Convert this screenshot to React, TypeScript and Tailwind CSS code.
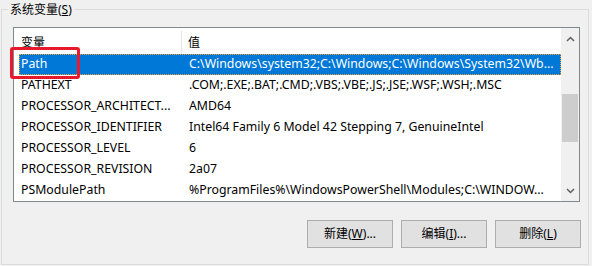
import React from "react";

const rows: [string, string][] = [
  ["Path", "C:\\Windows\\system32;C:\\Windows;C:\\Windows\\System32\\Wb..."],
  ["PATHEXT", ".COM;.EXE;.BAT;.CMD;.VBS;.VBE;.JS;.JSE;.WSF;.WSH;.MSC"],
  ["PROCESSOR_ARCHITECT...", "AMD64"],
  ["PROCESSOR_IDENTIFIER", "Intel64 Family 6 Model 42 Stepping 7, GenuineIntel"],
  ["PROCESSOR_LEVEL", "6"],
  ["PROCESSOR_REVISION", "2a07"],
  ["PSModulePath", "%ProgramFiles%\\WindowsPowerShell\\Modules;C:\\WINDOW..."],
];

const font = { fontFamily: '"Segoe UI", "Noto Sans", "Noto Sans CJK SC", sans-serif' };

function Btn({ label, k, suffix }: { label: string; k: string; suffix: string }) {
  return (
    <div className="w-[86px] h-[28px] border border-[#adadad] bg-[#e1e1e1] flex items-center justify-center text-[12px] text-black">
      <span>
        {label}(<span className="underline">{k}</span>){suffix}
      </span>
    </div>
  );
}

export default function App() {
  return (
    <div className="w-[592px] h-[266px] bg-[#f0f0f0] text-[12px] text-black overflow-hidden" style={font}>
      <div className="relative ml-px mt-[9px] w-[588px] h-[256px] border border-[#dcdcdc] pt-[17px] pl-[11px]">
        <div className="absolute left-[6px] top-[-9px] px-[2px] bg-[#f0f0f0] leading-[18px] text-[12px]">
          系统变量(<span className="underline">S</span>)
        </div>
        <div className="w-[567px] h-[175px] border border-[#828790] bg-white flex">
          <div className="flex-1 min-w-0 flex flex-col">
            <div className="h-[26px] pt-[3px] flex items-center shrink-0">
              <div className="w-[168px] h-full pl-[7px] flex items-center border-r border-[#e5e5e5]">变量</div>
              <div className="pl-[6px]">值</div>
            </div>
            {rows.map(([n, v], i) => {
              const sel = i === 0;
              return (
                <div key={n} className="h-[21px] shrink-0 flex pl-[5px] relative text-[12.3px]">
                  <div
                    className={
                      "flex-1 flex items-center min-w-0 " +
                      (sel ? "bg-[#0078d7] text-white outline-1 outline-dotted outline-[#f0a030] -outline-offset-1" : "")
                    }
                  >
                    <div className="w-[163px] pl-[2px] whitespace-nowrap overflow-hidden shrink-0">{n}</div>
                    <div className="pl-[7px] whitespace-nowrap min-w-0 flex-1 pr-[4px]">{v}</div>
                  </div>
                  {sel && (
                    <div className="absolute left-[-4px] top-[-7px] w-[70px] h-[32px] border-[3px] border-[#e8192c] rounded-[3px]" />
                  )}
                </div>
              );
            })}
          </div>
          <div className="w-[18px] bg-[#f0f0f0] flex flex-col shrink-0">
            <div className="h-[21px] flex items-center justify-center">
              <svg width="9" height="6" viewBox="0 0 9 6">
                <path d="M1 5 L4.5 1.5 L8 5" stroke="#606060" strokeWidth="1.5" fill="none" />
              </svg>
            </div>
            <div className="h-[45px]" />
            <div className="h-[48px] mx-[1px] bg-[#cdcdcd]" />
            <div className="flex-1" />
            <div className="h-[21px] flex items-center justify-center">
              <svg width="9" height="6" viewBox="0 0 9 6">
                <path d="M1 1 L4.5 4.5 L8 1" stroke="#606060" strokeWidth="1.5" fill="none" />
              </svg>
            </div>
          </div>
        </div>
        <div className="flex justify-end gap-[8px] mt-[18px] pr-[7px]">
          <Btn label="新建" k="W" suffix="..." />
          <Btn label="编辑" k="I" suffix="..." />
          <Btn label="删除" k="L" suffix="" />
        </div>
      </div>
    </div>
  );
}
